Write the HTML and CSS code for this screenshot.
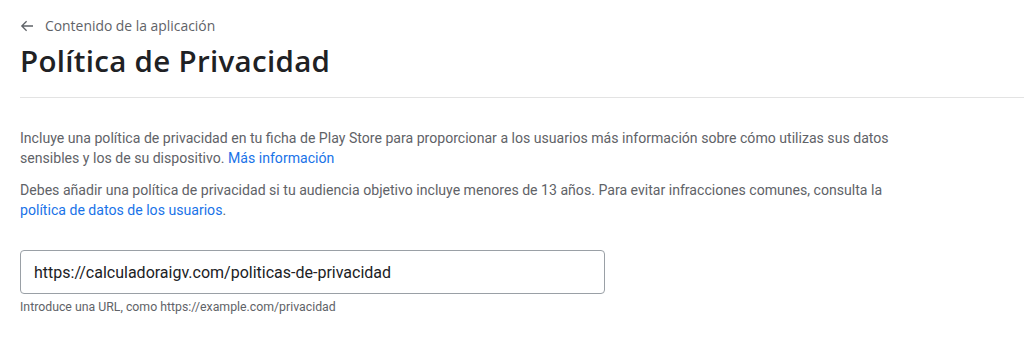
FILE: index.html
```html
<!DOCTYPE html>
<html lang="es">
<head>
<meta charset="utf-8">
<title>Política de Privacidad</title>
<link rel="stylesheet" href="styles.css">
</head>
<body>
<div class="page">
  <header class="head">
    <a class="back" href="#">
      <svg class="back-icon" viewBox="0 0 14 14" width="14" height="14" aria-hidden="true"><path d="M13 7H1.8M6.6 2.2L1.8 7l4.8 4.8" fill="none" stroke="#5f6368" stroke-width="1.3"/></svg>
      <span>Contenido de la aplicación</span>
    </a>
    <h1 class="title">Política de Privacidad</h1>
  </header>
  <div class="content">
    <p class="text">Incluye una política de privacidad en tu ficha de Play Store para proporcionar a los usuarios más información sobre cómo utilizas sus datos sensibles y los de su dispositivo. <a class="link" href="#">Más información</a></p>
    <p class="text">Debes añadir una política de privacidad si tu audiencia objetivo incluye menores de 13 años. Para evitar infracciones comunes, consulta la <a class="link" href="#">política de datos de los usuarios</a>.</p>
    <div class="field">
      <div class="input">https://calculadoraigv.com/politicas-de-privacidad</div>
      <div class="hint">Introduce una URL, como https://example.com/privacidad</div>
    </div>
  </div>
</div>
</body>
</html>
```
FILE: styles.css
```css
* { box-sizing: border-box; }
html, body { margin: 0; padding: 0; background: #fff; }
body { font-family: Roboto, "Liberation Sans", Arial, sans-serif; color: #202124; }
.page { padding-left: 20px; }
.head { padding-top: 17px; border-bottom: 1px solid #e3e3e3; padding-bottom: 18px; }
.back { display: flex; align-items: center; gap: 11px; text-decoration: none; color: #5f6368; font-family: "Open Sans", Roboto, sans-serif; font-size: 13.9px; line-height: 18px; }
.back-icon { display: block; }
.title { margin: 8px 0 0; font-family: "Open Sans", Roboto, sans-serif; font-weight: 600; font-size: 29.5px; line-height: 36px; color: #202124; letter-spacing: 0.3px; }
.content { padding-top: 30px; width: 900px; }
.text { margin: 0 0 12px; font-size: 14.1px; line-height: 20px; color: #5f6368; }
.link { color: #1a73e8; text-decoration: none; }
.field { padding-top: 18px; }
.input { width: 585px; height: 44px; border: 1px solid #9aa0a6; border-radius: 4px; padding: 0 13px; display: flex; align-items: center; font-size: 16px; color: #202124; }
.hint { margin-top: 6px; font-size: 12.3px; line-height: 14px; color: #5f6368; }
```
